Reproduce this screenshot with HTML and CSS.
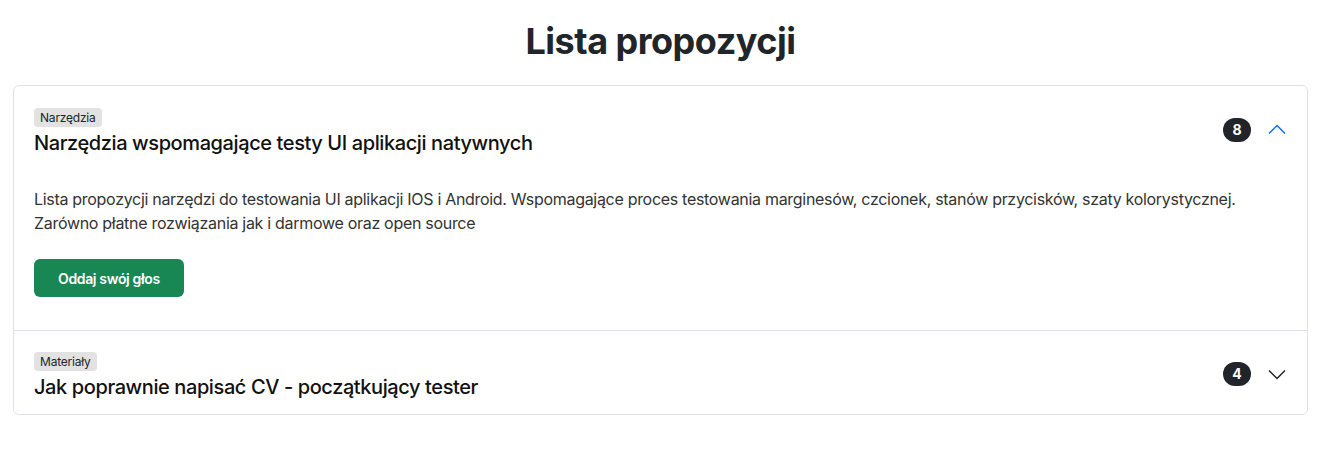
FILE: index.html
```html
<!DOCTYPE html>
<html lang="pl">
<head>
<meta charset="utf-8">
<title>Lista propozycji</title>
<link rel="stylesheet" href="styles.css">
</head>
<body>
<main class="page">
  <h1 class="page-title">Lista propozycji</h1>
  <div class="accordion">
    <section class="item">
      <div class="item-header">
        <div class="item-heading">
          <span class="tag">Narzędzia</span>
          <h2 class="item-title">Narzędzia wspomagające testy UI aplikacji natywnych</h2>
        </div>
        <div class="item-meta">
          <span class="count">8</span>
          <svg class="chevron open" width="20" height="20" viewBox="0 0 20 20" aria-hidden="true"><path d="M2 13.5 L10 5.5 L18 13.5" fill="none" stroke="currentColor" stroke-width="1.5"/></svg>
        </div>
      </div>
      <div class="item-body">
        <p class="desc">Lista propozycji narzędzi do testowania UI aplikacji IOS i Android. Wspomagające proces testowania marginesów, czcionek, stanów przycisków, szaty kolorystycznej. Zarówno płatne rozwiązania jak i darmowe oraz open source</p>
        <button class="vote" type="button">Oddaj swój głos</button>
      </div>
    </section>
    <section class="item">
      <div class="item-header">
        <div class="item-heading">
          <span class="tag">Materiały</span>
          <h2 class="item-title">Jak poprawnie napisać CV - początkujący tester</h2>
        </div>
        <div class="item-meta">
          <span class="count">4</span>
          <svg class="chevron" width="20" height="20" viewBox="0 0 20 20" aria-hidden="true"><path d="M2 6.5 L10 14.5 L18 6.5" fill="none" stroke="currentColor" stroke-width="1.5"/></svg>
        </div>
      </div>
    </section>
  </div>
</main>
</body>
</html>
```
FILE: styles.css
```css
* { box-sizing: border-box; }
html, body { margin: 0; padding: 0; background: #fff; }
body {
  font-family: Inter, "Noto Sans", sans-serif;
  color: #212529;
}
.page {
  padding: 0 22px 0 13px;
}
.page-title {
  margin: 0;
  padding-top: 17px;
  height: 85px;
  text-align: center;
  font-size: 36px;
  line-height: 48px;
  font-weight: 700;
  letter-spacing: -0.5px;
  color: #212529;
}
.accordion {
  border: 1px solid #dee2e6;
  border-radius: 6px;
  overflow: hidden;
}
.item + .item { border-top: 1px solid #dee2e6; }
.item-header {
  display: flex;
  align-items: center;
  padding: 22px 20px 16px 20px;
}
.item + .item .item-header { padding-top: 21px; padding-bottom: 15px; }
.item-heading {
  flex: 1;
  display: flex;
  flex-direction: column;
  align-items: flex-start;
}
.tag {
  display: inline-block;
  background: #e2e2e2;
  border-radius: 4px;
  font-size: 12px;
  line-height: 19px;
  padding: 0 6px;
  letter-spacing: -0.2px;
  color: #212529;
}
.item-title {
  margin: 4px 0 0 0;
  font-size: 20px;
  line-height: 24px;
  font-weight: 500;
  letter-spacing: -0.4px;
  color: #111;
}
.item-meta {
  display: flex;
  align-items: center;
  gap: 16px;
  margin-top: -4px;
}
.count {
  display: inline-flex;
  align-items: center;
  justify-content: center;
  width: 28px;
  height: 24px;
  border-radius: 12px;
  background: #212529;
  color: #fff;
  font-size: 14px;
  font-weight: 700;
}
.chevron { color: #212529; display: block; }
.chevron.open { color: #0d6efd; }
.item-body {
  padding: 16px 20px 33px 20px;
}
.desc {
  margin: 0;
  font-size: 16px;
  line-height: 24px;
  color: #333;
  letter-spacing: -0.3px;
}
.vote {
  margin-top: 24px;
  display: inline-block;
  height: 38px;
  padding: 0 24px;
  border: 0;
  border-radius: 6px;
  background: #198754;
  color: #fff;
  font-family: Inter, "Noto Sans", sans-serif;
  font-size: 14px;
  font-weight: 600;
  letter-spacing: -0.35px;
  vertical-align: top;
}
```
